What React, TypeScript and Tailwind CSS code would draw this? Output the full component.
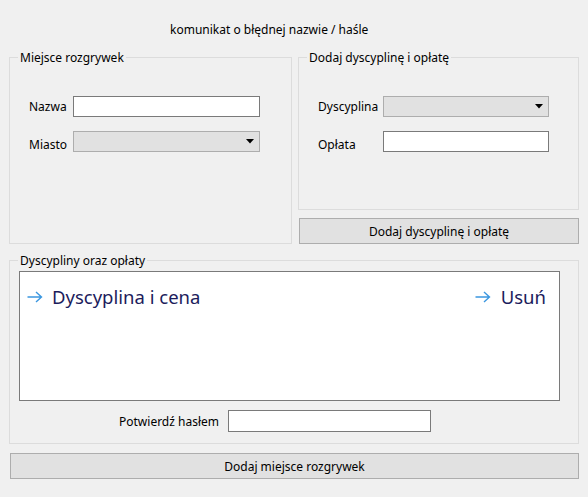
import React from "react";

const font = { fontFamily: '"Noto Sans", "Open Sans", sans-serif' };

function Arrow() {
  return (
    <svg width="16" height="12" viewBox="0 0 16 12" className="shrink-0">
      <path d="M0.5 6 H14.5 M9 1 L14.5 6 L9 11" fill="none" stroke="#3b97e0" strokeWidth="1.4" />
    </svg>
  );
}

function Combo({ w }: { w: string }) {
  return (
    <div className={`${w} h-[21px] bg-[#e1e1e1] border border-[#adadad] flex items-center justify-end pr-[5px]`}>
      <svg width="8" height="5" viewBox="0 0 8 5">
        <path d="M0 0 H8 L4 4.5 Z" fill="#000" />
      </svg>
    </div>
  );
}

function Input({ w, h = "h-[21px]" }: { w: string; h?: string }) {
  return <div className={`${w} ${h} bg-white border border-[#7a7a7a]`} />;
}

export default function App() {
  return (
    <div
      className="w-[588px] h-[497px] bg-[#f0f0f0] text-[12px] leading-[15px] text-black overflow-hidden"
      style={font}
    >
      <div className="h-[50px] pl-[170px] pt-[22px]">komunikat o błędnej nazwie / haśle</div>

      <div className="flex items-start">
        <fieldset className="ml-[9px] w-[283px] h-[194px] border border-[#dcdcdc]">
          <legend className="ml-[8px] px-[2px] leading-[15px]">Miejsce rozgrywek</legend>
          <div className="pl-[19px] pt-[31px] flex flex-col gap-[14px]">
            <div className="flex items-center">
              <span className="w-[44px]">Nazwa</span>
              <Input w="w-[187px]" />
            </div>
            <div className="flex items-end">
              <span className="w-[44px]">Miasto</span>
              <Combo w="w-[187px]" />
            </div>
          </div>
        </fieldset>

        <div className="ml-[6px] flex flex-col">
          <fieldset className="w-[281px] h-[160px] border border-[#dcdcdc]">
            <legend className="ml-[8px] px-[2px] leading-[15px]">Dodaj dyscyplinę i opłatę</legend>
            <div className="pl-[19px] pt-[31px] flex flex-col gap-[14px]">
              <div className="flex items-center">
                <span className="w-[65px]">Dyscyplina</span>
                <Combo w="w-[166px]" />
              </div>
              <div className="flex items-end">
                <span className="w-[65px]">Opłata</span>
                <Input w="w-[166px]" />
              </div>
            </div>
          </fieldset>
          <button className="mt-[8px] ml-[1px] w-[280px] h-[26px] bg-[#e1e1e1] border border-[#adadad] flex items-center justify-center">
            Dodaj dyscyplinę i opłatę
          </button>
        </div>
      </div>

      <fieldset className="mt-[9px] ml-[9px] w-[570px] h-[191px] border border-[#dcdcdc]">
        <legend className="ml-[8px] px-[2px] leading-[15px]">Dyscypliny oraz opłaty</legend>
        <div className="pl-[9px] pt-[3px]">
          <div className="w-[541px] h-[130px] bg-white border border-[#7a7a7a] flex items-start justify-between pl-[7px] pr-[13px] pt-[11px] text-[#1c1c5c] text-[18.5px] leading-[28px]">
            <div className="flex items-center gap-[9px]">
              <Arrow />
              <span>Dyscyplina i cena</span>
            </div>
            <div className="flex items-center gap-[10px]">
              <Arrow />
              <span>Usuń</span>
            </div>
          </div>
          <div className="flex items-center mt-[9px] pl-[100px]">
            <span className="w-[109px]">Potwierdź hasłem</span>
            <Input w="w-[203px]" h="h-[22px]" />
          </div>
        </div>
      </fieldset>

      <button className="mt-[9px] ml-[10px] w-[569px] h-[26px] bg-[#e1e1e1] border border-[#adadad] flex items-center justify-center">
        Dodaj miejsce rozgrywek
      </button>
    </div>
  );
}
